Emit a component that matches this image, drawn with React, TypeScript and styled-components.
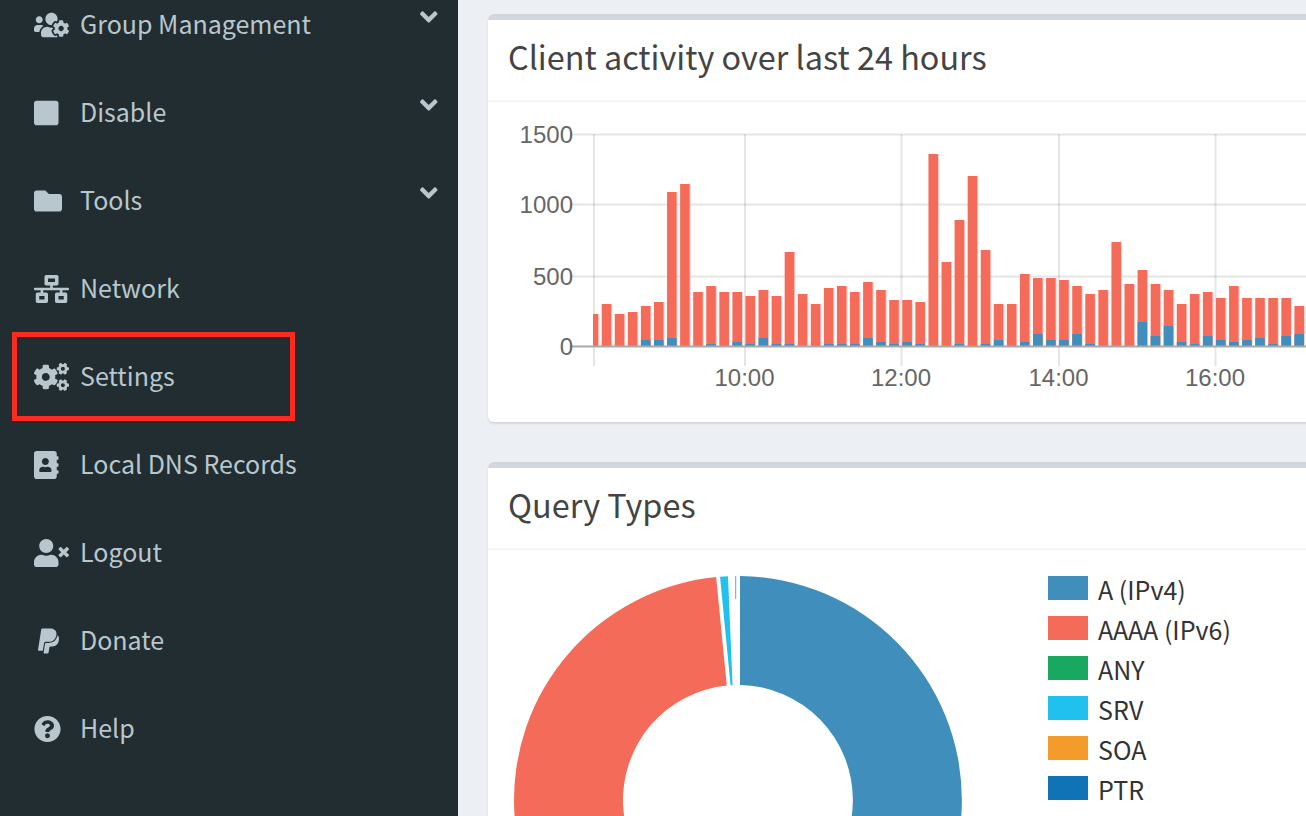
import React from "react";
import styled, { createGlobalStyle } from "styled-components";
import {
  FaUsersCog,
  FaStop,
  FaFolder,
  FaNetworkWired,
  FaCogs,
  FaAddressBook,
  FaUserTimes,
  FaPaypal,
  FaQuestionCircle,
  FaAngleDown,
} from "react-icons/fa";

const SANS = `"Noto Sans CJK SC", "Noto Sans", sans-serif`;

const GlobalStyle = createGlobalStyle`
  html, body {
    margin: 0;
    padding: 0;
    height: 816px;
    overflow: hidden;
    background: #ecf0f5;
    font-family: ${SANS};
  }
`;

// width is the glyph's own width at a 28px height
const menu = [
  { label: "Group Management", icon: <FaUsersCog />, width: 35, more: true },
  { label: "Disable", icon: <FaStop />, width: 24.5, more: true },
  { label: "Tools", icon: <FaFolder />, width: 28, more: true },
  { label: "Network", icon: <FaNetworkWired />, width: 35 },
  { label: "Settings", icon: <FaCogs />, width: 35, marked: true },
  { label: "Local DNS Records", icon: <FaAddressBook />, width: 24.5 },
  { label: "Logout", icon: <FaUserTimes />, width: 35 },
  { label: "Donate", icon: <FaPaypal />, width: 21, nudge: true },
  { label: "Help", icon: <FaQuestionCircle />, width: 27 },
];

// [height of the red bar, height of the blue bar], read off the reference in px above the axis
const bars: [number, number][] = [
  [32, 0], [42, 0], [32, 0], [34, 0], [40, 6], [44, 6], [154, 8], [162, 0],
  [54, 0], [60, 2], [54, 0], [54, 4], [50, 2], [56, 8], [50, 2], [94, 2],
  [52, 0], [42, 0], [58, 2], [60, 2], [54, 2], [64, 8], [56, 4], [46, 2],
  [46, 4], [44, 2], [192, 0], [84, 0], [126, 2], [170, 0], [96, 2], [42, 6],
  [42, 0], [72, 4], [68, 12], [68, 6], [66, 6], [60, 12], [52, 2], [56, 0],
  [104, 0], [62, 0], [76, 24], [62, 10], [56, 20], [42, 4], [52, 2], [54, 10],
  [48, 6], [60, 4], [48, 6], [48, 8], [48, 2], [48, 10], [40, 12],
];

const RED = "#f56b5a";
const BLUE = "#408ebb";
const AXIS_Y = 236;
const Y_GRID = [24.5, 94.5, 166.5];
const X_GRID = [94, 245, 401.5, 559, 715.5];
const Y_LABELS = [
  { y: 24.5, text: "1500" },
  { y: 94.5, text: "1000" },
  { y: 166.5, text: "500" },
  { y: 236, text: "0" },
];
const X_LABELS = [
  { x: 244.5, text: "10:00" },
  { x: 401, text: "12:00" },
  { x: 558.5, text: "14:00" },
  { x: 715, text: "16:00" },
];

const ActivityChart = () => (
  <ChartSvg viewBox="0 0 806 280" width={806} height={280}>
    {Y_GRID.map((y) => (
      <line key={y} x1={72} x2={806} y1={y} y2={y} stroke="rgba(0,0,0,0.1)" strokeWidth={2} />
    ))}
    {X_GRID.map((x) => (
      <line key={x} x1={x} x2={x} y1={24} y2={256} stroke="rgba(0,0,0,0.1)" strokeWidth={2} />
    ))}
    {bars.map(([red, blue], i) => {
      const x = 101.7 + (i - 1) * 13.07;
      const left = Math.max(x, 93);
      const w = x + 9.6 - left;
      return (
        <g key={i}>
          <rect x={left} y={AXIS_Y - red} width={w} height={red} fill={RED} />
          <rect x={left + w} y={AXIS_Y - red} width={0.9} height={red} fill={RED} opacity={0.35} />
          {blue > 0 && <rect x={left} y={AXIS_Y - blue} width={w} height={blue} fill={BLUE} />}
        </g>
      );
    })}
    <line x1={72} x2={806} y1={AXIS_Y + 0.5} y2={AXIS_Y + 0.5} stroke="#a9a9a9" strokeWidth={2} />
    {Y_LABELS.map((l) => (
      <AxisText key={l.text} x={73} y={l.y + 8.5} textAnchor="end">
        {l.text}
      </AxisText>
    ))}
    {X_LABELS.map((l) => (
      <AxisText key={l.text} x={l.x} y={276} textAnchor="middle">
        {l.text}
      </AxisText>
    ))}
  </ChartSvg>
);

const polar = (r: number, deg: number) => {
  const a = (deg * Math.PI) / 180;
  return `${(738 + r * Math.sin(a)).toFixed(2)} ${(224 - r * Math.cos(a)).toFixed(2)}`;
};

// the gap beside the blue slice has parallel sides, so its inner corner sits at a wider angle
const slice = (from: number, to: number, innerFrom = from, innerTo = to, R = 224, r = 115) =>
  `M${polar(R, from)}A${R} ${R} 0 0 1 ${polar(R, to)}L${polar(r, innerTo)}A${r} ${r} 0 0 0 ${polar(r, innerFrom)}Z`;

const Donut = () => (
  <DonutSvg viewBox="488 0 500 270" width={500} height={270}>
    <path d={slice(0.51, 180, 1)} fill={BLUE} />
    <path d={slice(180, 354.4)} fill={RED} />
    <path d={slice(355.4, 357.44, 356.3, 357.3)} fill="#20c0ef" />
    <line x1={735.7} x2={735.7} y1={0} y2={23} stroke={BLUE} strokeWidth={0.8} />
  </DonutSvg>
);

const legend = [
  { label: "A (IPv4)", color: BLUE },
  { label: "AAAA (IPv6)", color: RED },
  { label: "ANY", color: "#18a860" },
  { label: "SRV", color: "#20c0ef" },
  { label: "SOA", color: "#f39c2b" },
  { label: "PTR", color: "#0f73b5" },
];

const App = () => (
  <>
    <GlobalStyle />
    <Page>
      <Sidebar>
        <Menu>
          {menu.map((item) => (
            <MenuRow key={item.label}>
              <IconSlot $nudge={item.nudge} $width={item.width}>
                {item.icon}
              </IconSlot>
              <MenuLabel>{item.label}</MenuLabel>
              {item.more && (
                <Caret>
                  <FaAngleDown />
                </Caret>
              )}
              {item.marked && <Marker />}
            </MenuRow>
          ))}
        </Menu>
      </Sidebar>
      <Content>
        <Card $height={408}>
          <CardHeader>
            <CardTitle>Client activity over last 24 hours</CardTitle>
          </CardHeader>
          <ActivityChart />
        </Card>
        <Card $height={500}>
          <CardHeader>
            <CardTitle>Query Types</CardTitle>
          </CardHeader>
          <PieBody>
            <Donut />
            <Legend>
              {legend.map((l) => (
                <LegendRow key={l.label}>
                  <Swatch $color={l.color} />
                  <span>{l.label}</span>
                </LegendRow>
              ))}
            </Legend>
          </PieBody>
        </Card>
      </Content>
    </Page>
  </>
);

const Page = styled.div`
  display: flex;
  width: 1306px;
  height: 816px;
  overflow: hidden;
`;

const Sidebar = styled.aside`
  flex: 0 0 458px;
  height: 816px;
  background: #222d32;
  overflow: hidden;
`;

const Menu = styled.nav`
  display: flex;
  flex-direction: column;
  margin-top: -19px;
`;

const MenuRow = styled.div`
  position: relative;
  display: flex;
  align-items: center;
  height: 88px;
  padding-left: 34px;
  color: #b8c7ce;
  font-size: 25px;
`;

const IconSlot = styled.span<{ $nudge?: boolean; $width: number }>`
  display: flex;
  align-items: center;
  flex: 0 0 46px;
  box-sizing: border-box;
  padding-left: ${(p) => (p.$nudge ? "4px" : "0")};

  svg {
    flex: none;
    width: ${(p) => p.$width}px;
    height: 28px;
  }
`;

const MenuLabel = styled.span`
  line-height: 1;
  margin-top: -4px;
`;

const Caret = styled.span`
  position: absolute;
  left: 420px;
  top: 22px;
  display: flex;

  svg {
    width: 17.5px;
    height: 28px;
  }
`;

const Marker = styled.span`
  position: absolute;
  left: 12px;
  top: -1px;
  width: 283px;
  height: 89px;
  box-sizing: border-box;
  border: 5px solid #ff2a1f;
`;

const Content = styled.main`
  flex: 1;
  display: flex;
  flex-direction: column;
  gap: 40px;
  padding: 14px 0 0 30px;
  min-width: 0;
`;

const Card = styled.section<{ $height: number }>`
  flex: 0 0 ${(p) => p.$height}px;
  width: 860px;
  box-sizing: border-box;
  background: #fff;
  border-top: 6px solid #d2d6de;
  border-radius: 6px;
  box-shadow: 0 2px 2px rgba(0, 0, 0, 0.1);
`;

const CardHeader = styled.header`
  display: flex;
  align-items: center;
  height: 80px;
  padding-left: 20px;
  border-bottom: 2px solid #f4f4f4;
`;

const CardTitle = styled.h3`
  margin: -8px 0 0;
  font-size: 32.4px;
  font-weight: 400;
  color: #444;
  line-height: 1;
`;

const ChartSvg = styled.svg`
  display: block;
  margin: 8px 0 0 12px;
  overflow: visible;
`;

const AxisText = styled.text`
  font-family: "Liberation Sans", Arial, sans-serif;
  font-size: 24px;
  fill: #666;
`;

const PieBody = styled.div`
  display: flex;
  padding-top: 26px;
`;

const DonutSvg = styled.svg`
  display: block;
  flex: 0 0 500px;
  overflow: visible;
`;

const Legend = styled.ul`
  list-style: none;
  margin: 0 0 0 60px;
  padding: 0;
  display: flex;
  flex-direction: column;
`;

const LegendRow = styled.li`
  display: flex;
  align-items: flex-start;
  gap: 10px;
  height: 40px;
  font-size: 25px;
  color: #333;
  line-height: 26px;
`;

const Swatch = styled.i<{ $color: string }>`
  display: block;
  width: 40px;
  height: 24px;
  background: ${(p) => p.$color};
`;

export default App;
